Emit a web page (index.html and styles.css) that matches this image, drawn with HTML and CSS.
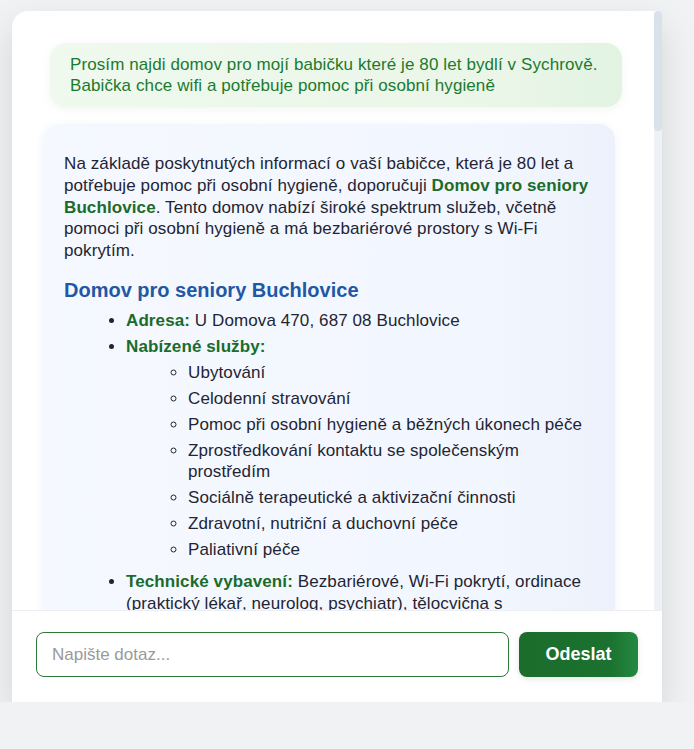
FILE: index.html
```html
<!DOCTYPE html>
<html lang="cs">
<head>
<meta charset="utf-8">
<title>Chat</title>
<link rel="stylesheet" href="styles.css">
</head>
<body>
<div class="chat">
  <div class="chat-body">
    <div class="messages">
      <div class="msg user">Prosím najdi domov pro mojí babičku které je 80 let bydlí v Sychrově. Babička chce wifi a potřebuje pomoc při osobní hygieně</div>
      <div class="msg bot">
        <p>Na základě poskytnutých informací o vaší babičce, která je 80 let a potřebuje pomoc při osobní hygieně, doporučuji <strong>Domov pro seniory Buchlovice</strong>. Tento domov nabízí široké spektrum služeb, včetně pomoci při osobní hygieně a má bezbariérové prostory s Wi-Fi pokrytím.</p>
        <h3>Domov pro seniory Buchlovice</h3>
        <ul>
          <li><strong>Adresa:</strong> U Domova 470, 687 08 Buchlovice</li>
          <li><strong>Nabízené služby:</strong>
            <ul>
              <li>Ubytování</li>
              <li>Celodenní stravování</li>
              <li>Pomoc při osobní hygieně a běžných úkonech péče</li>
              <li>Zprostředkování kontaktu se společenským prostředím</li>
              <li>Sociálně terapeutické a aktivizační činnosti</li>
              <li>Zdravotní, nutriční a duchovní péče</li>
              <li>Paliativní péče</li>
            </ul>
          </li>
          <li><strong>Technické vybavení:</strong> Bezbariérové, Wi-Fi pokrytí, ordinace (praktický lékař, neurolog, psychiatr), tělocvična s rehabilitačními pomůckami a zahrada.</li>
          <li><strong>Kontakt:</strong> +420 572 595 111</li>
        </ul>
        <p>Pokud budete potřebovat další informace, neváhejte se zeptat.</p>
      </div>
    </div>
    <div class="scrollbar"><div class="scrollbar-thumb"></div></div>
  </div>
  <form class="composer">
    <input class="composer-input" type="text" placeholder="Napište dotaz...">
    <button class="composer-send" type="button">Odeslat</button>
  </form>
</div>
</body>
</html>
```
FILE: styles.css
```css
html, body {
  margin: 0;
  padding: 0;
}
body {
  background: #f1f2f3;
  font-family: "Liberation Sans", Arial, Helvetica, sans-serif;
  color: #1f2533;
  padding: 11px 0 0 12px;
}
.chat {
  width: 650px;
  height: 691px;
  background: #ffffff;
  border-radius: 16px 8px 0 0;
  display: flex;
  flex-direction: column;
  box-shadow: 0 14px 36px rgba(0, 0, 0, 0.12);
}
.chat-body {
  flex: 1;
  min-height: 0;
  display: flex;
  border-bottom: 1px solid #eceef1;
}
.messages {
  flex: 1;
  min-width: 0;
  overflow: hidden;
  padding: 32px 32px 32px 31px;
  display: flex;
  flex-direction: column;
  gap: 17px;
}
.scrollbar {
  width: 8px;
  flex-shrink: 0;
  background: #eef1f6;
  border-radius: 4px 4px 0 0;
}
.scrollbar-thumb {
  height: 120px;
  background: #d9e1eb;
  border-radius: 4px;
}
.msg {
  width: 572px;
  box-sizing: border-box;
  flex-shrink: 0;
  border-radius: 16px;
  font-size: 17px;
  letter-spacing: 0.1px;
}
.user {
  align-self: flex-end;
  padding: 11px 20px 11px;
  line-height: 21px;
  color: #1c7a30;
  background: linear-gradient(90deg, #eff9ee 0%, #eaf6e8 80%, #e2f3e2 100%);
  box-shadow: 0 2px 10px rgba(60, 140, 60, 0.08);
}
.bot {
  align-self: flex-start;
  padding: 13px 21px 20px;
  line-height: 21.75px;
  background: linear-gradient(90deg, #f5f8ff 0%, #f2f6fe 80%, #ecf1fb 100%);
  box-shadow: 0 2px 10px rgba(60, 90, 160, 0.07);
}
.bot p {
  margin: 16px 0;
}
.bot strong {
  color: #1b6b2a;
}
.bot h3 {
  color: #1f58a4;
  font-size: 20px;
  letter-spacing: 0;
  line-height: 24px;
  margin: 15px 0 8px;
}
.bot ul {
  margin: 0;
  padding-left: 62px;
}
.bot li {
  margin-bottom: 4px;
}
.bot ul ul {
  list-style: circle;
  margin-top: 5px;
  margin-bottom: 11px;
}
.composer {
  display: flex;
  gap: 10px;
  padding: 21px 24px 25px;
  margin: 0;
}
.composer-input {
  flex: 1;
  height: 45px;
  box-sizing: border-box;
  border: 1px solid #2c7a3a;
  border-radius: 8px;
  padding: 0 15px;
  font-family: "Liberation Sans", Arial, Helvetica, sans-serif;
  font-size: 17px;
  color: #222;
  outline: none;
}
.composer-input::placeholder {
  color: #9a9a9a;
}
.composer-send {
  width: 119px;
  height: 45px;
  border: none;
  border-radius: 8px;
  background: linear-gradient(90deg, #1b6d2c 0%, #1b712f 75%, #23893f 100%);
  color: #ffffff;
  font-family: "Liberation Sans", Arial, Helvetica, sans-serif;
  font-size: 18px;
  font-weight: bold;
  box-shadow: 0 2px 6px rgba(0, 0, 0, 0.1);
}
```
